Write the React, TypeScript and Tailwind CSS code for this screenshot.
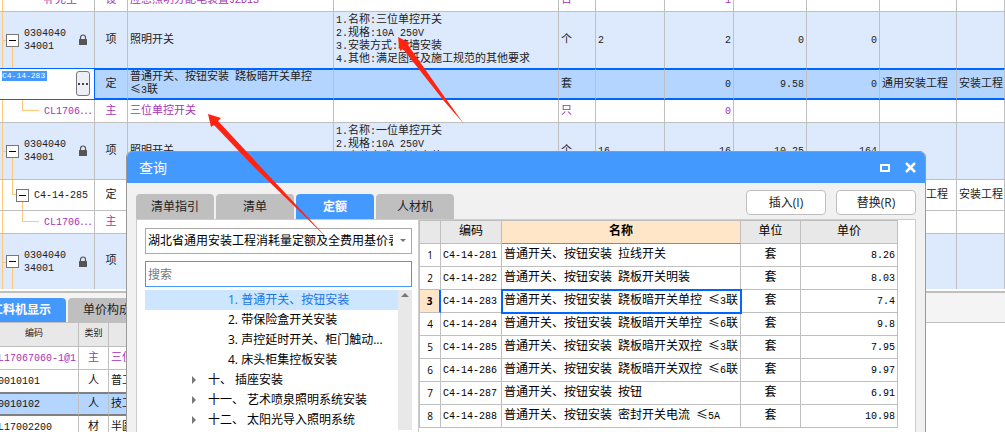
import React, { useState } from 'react';
import { X } from 'lucide-react';

type RowKind = 'item' | 'quota' | 'material' | 'selected';

interface BillRow {
  kind: RowKind;
  height: string;
  code: string;
  type: string;
  name: string;
  feature?: string[];
  unit?: string;
  expr?: string;
  qty?: string;
  price?: string;
  total?: string;
  profession?: string;
  fee?: string;
}

const billRows: BillRow[] = [
  { kind: 'material', height: 'h-[23px]', code: '补充主', type: '设', name: '应急照明分配电装置JZD1S', unit: '台', qty: '1' },
  {
    kind: 'item',
    height: 'h-14',
    code: '030404034001',
    type: '项',
    name: '照明开关',
    feature: ['1.名称:三位单控开关', '2.规格:10A 250V', '3.安装方式:暗墙安装', '4.其他:满足图纸及施工规范的其他要求'],
    unit: '个',
    expr: '2',
    qty: '2',
    price: '0',
    total: '0',
  },
  {
    kind: 'selected',
    height: 'h-8',
    code: 'C4-14-283',
    type: '定',
    name: '普通开关、按钮安装 跷板暗开关单控 ≤3联',
    unit: '套',
    qty: '0',
    price: '9.58',
    total: '0',
    profession: '通用安装工程',
    fee: '安装工程',
  },
  { kind: 'material', height: 'h-[23px]', code: 'CL1706⋯', type: '主', name: '三位单控开关', unit: '只', qty: '0' },
  {
    kind: 'item',
    height: 'h-[57px]',
    code: '030404034001',
    type: '项',
    name: '照明开关',
    feature: ['1.名称:一位单控开关', '2.规格:10A 250V', '3.安装方式:暗墙安装', '4.其他:满足图纸及施工规范的其他要求'],
    unit: '个',
    expr: '16',
    qty: '16',
    price: '10.25',
    total: '164',
  },
  {
    kind: 'quota',
    height: 'h-[31px]',
    code: 'C4-14-285',
    type: '定',
    name: '',
    profession: '通用安装工程',
    fee: '安装工程',
  },
  { kind: 'material', height: 'h-[23px]', code: 'CL1706⋯', type: '主', name: '' },
  { kind: 'item', height: 'h-[55px]', code: '030404034001', type: '项', name: '' },
];

const quotaRows = [
  { code: 'C4-14-281', name: '普通开关、按钮安装 拉线开关', price: '8.26' },
  { code: 'C4-14-282', name: '普通开关、按钮安装 跷板开关明装', price: '8.03' },
  { code: 'C4-14-283', name: '普通开关、按钮安装 跷板暗开关单控 ≤3联', price: '7.4' },
  { code: 'C4-14-284', name: '普通开关、按钮安装 跷板暗开关单控 ≤6联', price: '9.8' },
  { code: 'C4-14-285', name: '普通开关、按钮安装 跷板暗开关双控 ≤3联', price: '7.95' },
  { code: 'C4-14-286', name: '普通开关、按钮安装 跷板暗开关双控 ≤6联', price: '9.97' },
  { code: 'C4-14-287', name: '普通开关、按钮安装 按钮', price: '6.91' },
  { code: 'C4-14-288', name: '普通开关、按钮安装 密封开关电流 ≤5A', price: '10.98' },
];

const resourceRows = [
  { code: 'CL17067060-1@1', type: '主', name: '三位' },
  { code: '00010101', type: '人', name: '普工' },
  { code: '00010102', type: '人', name: '技工' },
  { code: 'CL17002200', type: '材', name: '半圆' },
];

const treeItems = [
  { label: '1. 普通开关、按钮安装', leaf: true },
  { label: '2. 带保险盒开关安装', leaf: true },
  { label: '3. 声控延时开关、柜门触动...', leaf: true },
  { label: '4. 床头柜集控板安装', leaf: true },
  { label: '十、 插座安装', leaf: false },
  { label: '十一、 艺术喷泉照明系统安装', leaf: false },
  { label: '十二、 太阳光导入照明系统', leaf: false },
];

const tabs = ['清单指引', '清单', '定额', '人材机'];

// Grid text: half-width characters one size smaller, full-width signs from the CJK font
function GridText({ children }: { children: string }) {
  const parts = children.split(/([\x20-\x7e]+|[≤⋯])/).filter(Boolean);
  return (
    <>
      {parts.map((part, i) => {
        if (/^[\x20-\x7e]/.test(part)) {
          return (
            <span key={i} className="text-[10px]">
              {part}
            </span>
          );
        }
        if (/^[≤⋯]/.test(part)) {
          return (
            <span key={i} className="font-['Noto_Sans_CJK_SC',sans-serif] leading-[8px]">
              {part}
            </span>
          );
        }
        return part;
      })}
    </>
  );
}

function LockIcon() {
  return (
    <svg width="10" height="12" viewBox="0 0 10 12" className="shrink-0" aria-hidden="true">
      <path d="M2.5 6V3.5a2.5 2.5 0 0 1 5 0V6" fill="none" stroke="#555" strokeWidth="1.2" />
      <rect x="1" y="5" width="8" height="6" rx="0.5" fill="#555" />
    </svg>
  );
}

function Toggle() {
  return (
    <button
      type="button"
      aria-label="折叠"
      className="relative flex h-[13px] w-[13px] shrink-0 items-center justify-center border border-[#777] bg-white"
    >
      <span className="h-px w-[7px] bg-black" />
    </button>
  );
}

function CodeCell({ row, index }: { row: BillRow; index: number }) {
  if (row.kind === 'selected') {
    return (
      <div className="flex h-full justify-between border-y border-[#0066ff] bg-white py-0.5 pl-0.5 pr-1">
        <input
          aria-label="编码"
          defaultValue={row.code}
          className="h-[10px] w-[45px] bg-[#4499ff] text-[8px] leading-[10px] text-white outline-none"
        />
        <button
          type="button"
          aria-label="选择"
          className="flex h-[25px] w-[14px] items-center justify-center gap-0.5 rounded-[3px] border border-[#777] bg-[#eceff5]"
        >
          <i className="h-0.5 w-0.5 bg-[#444]" />
          <i className="h-0.5 w-0.5 bg-[#444]" />
          <i className="h-0.5 w-0.5 bg-[#444]" />
        </button>
      </div>
    );
  }

  const line = 'absolute border-[#ffc878]';
  return (
    <div className="relative flex h-full items-center">
      <span className={`${line} inset-y-0 left-[2px] border-l`} />
      {row.kind === 'item' && (
        <>
          <span className={`${line} left-[2px] top-1/2 w-1 border-t`} />
          <span className={`${line} bottom-0 left-3 top-1/2 border-l`} />
          <div className="flex w-full items-center pl-1.5 pr-1.5">
            <Toggle />
            <span className="ml-[5px] w-[43px] break-all">
              <GridText>{row.code}</GridText>
            </span>
            <span className="ml-auto">
              <LockIcon />
            </span>
          </div>
        </>
      )}
      {row.kind === 'quota' && (
        <>
          <span className={`${line} bottom-1/2 left-3 top-0 w-1 border-b border-l`} />
          <span className={`${line} bottom-0 left-[22px] top-1/2 border-l`} />
          <div className="flex items-center pl-4">
            <Toggle />
            <span className="ml-[5px]">
              <GridText>{row.code}</GridText>
            </span>
          </div>
        </>
      )}
      {row.kind === 'material' && (
        <>
          {index > 0 && <span className={`${line} bottom-1/2 left-[22px] top-0 w-[17px] border-b border-l`} />}
          <span className="whitespace-nowrap pl-11">
            <GridText>{row.code}</GridText>
          </span>
        </>
      )}
    </div>
  );
}

function BillTable() {
  return (
    <table className="-mt-[11px] h-px w-full table-fixed border-separate border-spacing-0 text-[11px] leading-[13px]">
      <colgroup>
        <col className="w-[95px]" />
        <col className="w-[33px]" />
        <col className="w-[206px]" />
        <col className="w-[225px]" />
        <col className="w-[37px]" />
        <col className="w-[69px]" />
        <col className="w-[69px]" />
        <col className="w-[73px]" />
        <col className="w-[73px]" />
        <col className="w-[77px]" />
        <col />
      </colgroup>
      <tbody>
        {billRows.map((row, index) => {
          const selected = row.kind === 'selected';
          const beforeSelected = billRows[index + 1]?.kind === 'selected';
          const color = row.kind === 'material' ? 'text-[#a832b4]' : 'text-[#222]';
          const bg = selected ? 'bg-[#b3d5ff]' : row.kind === 'item' ? 'bg-[#dde9fd]' : 'bg-white';
          const edge = selected
            ? 'border-y-2 border-y-[#0066ff]'
            : beforeSelected || index === billRows.length - 1
              ? ''
              : 'border-b border-b-[#bfbfbf]';
          const cell = `overflow-hidden border-r border-r-[#bfbfbf] ${edge}`;
          return (
            <tr key={index} className={`${row.height} ${color} ${bg}`}>
              <td className={`h-full border-r p-0 ${selected ? 'border-r-[#0066ff]' : `border-r-[#bfbfbf] ${edge}`}`}>
                <CodeCell row={row} index={index} />
              </td>
              <td className={`${cell} p-0 text-center`}>{row.type}</td>
              <td className={`${cell} px-0.5 py-0`}>
                <GridText>{row.name}</GridText>
              </td>
              <td className={`${cell} px-0.5 py-0`}>
                {row.feature?.map((text) => (
                  <div key={text} className="whitespace-nowrap">
                    <GridText>{text}</GridText>
                  </div>
                ))}
              </td>
              <td className={`${cell} px-0.5 py-0`}>{row.unit}</td>
              <td className={`${cell} px-0.5 py-0`}>
                <GridText>{row.expr ?? ''}</GridText>
              </td>
              <td className={`${cell} px-0.5 py-0 text-right`}>
                <GridText>{row.qty ?? ''}</GridText>
              </td>
              <td className={`${cell} px-0.5 py-0 text-right`}>
                <GridText>{row.price ?? ''}</GridText>
              </td>
              <td className={`${cell} px-0.5 py-0 text-right`}>
                <GridText>{row.total ?? ''}</GridText>
              </td>
              <td className={`${cell} whitespace-nowrap px-0.5 py-0`}>{row.profession}</td>
              <td className={`${cell} whitespace-nowrap px-0.5 py-0`}>{row.fee}</td>
            </tr>
          );
        })}
      </tbody>
    </table>
  );
}

function ResourcePanel() {
  return (
    <section className="flex-1 overflow-hidden border-t-2 border-[#bfbfbf] bg-white">
      <div className="flex h-[30px] items-end gap-0.5 border-b border-[#bfbfbf] bg-[#f4f4f4] font-['Open_Sans','Noto_Sans_CJK_SC',sans-serif] text-xs">
        <button
          type="button"
          className="flex h-6 w-[66px] items-center justify-end overflow-hidden whitespace-nowrap rounded-tr-sm bg-[#4499ff] pr-[15px] font-bold text-white"
        >
          工料机显示
        </button>
        <button type="button" className="h-6 rounded-t-sm bg-[#bfbfbf] px-[15px] text-[#222]">
          单价构成
        </button>
      </div>
      <table className="-ml-[10px] w-[460px] table-fixed border-separate border-spacing-0 text-[11px] leading-[13px]">
        <colgroup>
          <col className="w-[89px]" />
          <col className="w-[30px]" />
          <col />
        </colgroup>
        <thead>
          <tr className="h-6 bg-[#e8e8e8] text-[9px] text-[#222]">
            <th className="border-b border-r border-[#bfbfbf] p-0 font-normal">编码</th>
            <th className="border-b border-r border-[#bfbfbf] p-0 font-normal">类别</th>
            <th className="border-b border-r border-[#bfbfbf] p-0 font-normal" />
          </tr>
        </thead>
        <tbody>
          {resourceRows.map((row, i) => {
            const edge = i === 2 ? 'border-y-2 border-y-[#808080]' : i === 1 ? '' : 'border-b border-b-[#bfbfbf]';
            const height = i === 2 ? 'h-6' : i === 1 ? 'h-[22px]' : 'h-[23px]';
            const cell = `border-r border-r-[#bfbfbf] ${edge}`;
            return (
              <tr
                key={row.code}
                className={`${height} ${i === 2 ? 'bg-[#b3d5ff]' : ''} ${i === 0 ? 'text-[#a832b4]' : 'text-[#111]'}`}
              >
                <td className={`${cell} px-0.5 py-0`}>
                  <GridText>{row.code}</GridText>
                </td>
                <td className={`${cell} p-0 text-center`}>{row.type}</td>
                <td className={`${cell} px-0.5 py-0`}>{row.name}</td>
              </tr>
            );
          })}
        </tbody>
      </table>
    </section>
  );
}

function QuotaTable() {
  const cell = 'border-b border-r border-[#bfbfbf]';
  return (
    <table className="w-[479px] table-fixed border-separate border-spacing-0 border-l border-t border-[#bfbfbf] text-xs leading-4 text-black">
      <colgroup>
        <col className="w-[21px]" />
        <col className="w-[61px]" />
        <col className="w-[239px]" />
        <col className="w-[60px]" />
        <col />
      </colgroup>
      <thead>
        <tr className="h-[23px] bg-[#e8e8e8]">
          <th className={`${cell} p-0`} aria-label="序号" />
          <th className={`${cell} p-0 font-normal`}>编码</th>
          <th className="border-b border-r border-b-[#4499ff] border-r-[#bfbfbf] bg-[#ffe6c8] p-0 font-bold">名称</th>
          <th className={`${cell} p-0 font-normal`}>单位</th>
          <th className={`${cell} p-0 font-normal`}>单价</th>
        </tr>
      </thead>
      <tbody>
        {quotaRows.map((row, i) => {
          const active = i === 2;
          return (
            <tr key={row.code} className="h-[23px]">
              <th
                className={`border-b border-b-[#bfbfbf] p-0 font-['Open_Sans',sans-serif] text-[10px] ${
                  active
                    ? 'border-r-2 border-r-[#0066ff] bg-[#ffe6c8] font-bold'
                    : 'border-r border-r-[#bfbfbf] font-normal'
                }`}
              >
                {i + 1}
              </th>
              <td className={`${cell} px-0.5 py-0`}>
                <GridText>{row.code}</GridText>
              </td>
              <td
                className={`whitespace-nowrap p-0 pl-0.5 ${
                  active ? 'outline-2 -outline-offset-1 outline-[#0066ff]' : cell
                }`}
              >
                <GridText>{row.name}</GridText>
              </td>
              <td className={`${cell} p-0 text-center`}>套</td>
              <td className={`${cell} px-0.5 py-0 text-right`}>
                <GridText>{row.price}</GridText>
              </td>
            </tr>
          );
        })}
      </tbody>
    </table>
  );
}

function QueryDialog() {
  const [tab, setTab] = useState('定额');
  const [current, setCurrent] = useState(0);

  return (
    <div
      role="dialog"
      aria-label="查询"
      className="absolute left-[126px] top-[151px] flex h-[320px] w-[800px] flex-col overflow-hidden rounded-t-md border border-[#999] bg-[#f1f1f1] font-['Open_Sans','Noto_Sans_CJK_SC',sans-serif] text-xs text-black"
    >
      <header className="flex h-[31px] shrink-0 items-center bg-[#4499ff] pl-3 pr-[7px] text-white">
        <h2 className="flex-1 text-sm">查询</h2>
        <button type="button" aria-label="最大化" className="mr-[13px] h-2 w-[10px] border-2 border-white" />
        <button type="button" aria-label="关闭">
          <X size={15} strokeWidth={4} />
        </button>
      </header>

      <div className="flex h-9 shrink-0 items-end justify-between pl-[9px] pr-[9px]">
        <div className="flex gap-0.5" role="tablist">
          {tabs.map((label) => (
            <button
              key={label}
              type="button"
              role="tab"
              aria-selected={tab === label}
              onClick={() => setTab(label)}
              className={`h-[25px] w-[78px] rounded-t-sm ${
                tab === label ? 'bg-[#4499ff] font-bold text-white' : 'bg-[#bfbfbf] text-[#222]'
              }`}
            >
              {label}
            </button>
          ))}
        </div>
        <div className="flex gap-[10px] pb-1">
          <button type="button" className="h-[25px] w-20 rounded-sm border border-[#bfbfbf] bg-white text-[#222]">
            插入(I)
          </button>
          <button type="button" className="h-[25px] w-20 rounded-sm border border-[#bfbfbf] bg-white text-[#222]">
            替换(R)
          </button>
        </div>
      </div>

      <div className="mx-[9px] flex flex-1 overflow-hidden border border-[#ccc] bg-white">
        <div className="w-[282px] shrink-0 border-r border-[#ccc] pl-2 pt-2">
          <div className="relative w-[267px]">
            <select
              aria-label="定额库"
              className="h-[26px] w-full appearance-none border border-[#aaa] bg-white pl-0.5 pr-[18px]"
            >
              <option>湖北省通用安装工程消耗量定额及全费用基价表</option>
            </select>
            <span className="pointer-events-none absolute right-1.5 top-[11px] border-x-[3px] border-t-[3px] border-x-transparent border-t-[#777]" />
          </div>
          <input
            type="text"
            aria-label="搜索"
            placeholder="搜索"
            className="mt-[7px] block h-[26px] w-[267px] border border-[#4499ff] px-0.5 outline-none placeholder:text-[#777]"
          />
          <div className="mt-[3px] flex w-[267px]">
            <ul className="flex-1">
              {treeItems.map((item, i) => (
                <li key={item.label}>
                  <button
                    type="button"
                    onClick={() => setCurrent(i)}
                    className={`flex h-5 w-full items-center whitespace-nowrap ${
                      item.leaf ? 'pl-[83px]' : 'pl-[47px]'
                    } ${current === i ? 'bg-[#cce6ff] text-[#1a75e6]' : ''}`}
                  >
                    {!item.leaf && (
                      <span className="mr-3 border-y-4 border-l-4 border-y-transparent border-l-[#777]" />
                    )}
                    {item.label}
                  </button>
                </li>
              ))}
            </ul>
            <div className="flex w-[14px] justify-center bg-[#e8e8e8] pt-[3px]">
              <span className="h-0 border-x-4 border-b-4 border-x-transparent border-b-[#777]" />
            </div>
          </div>
        </div>
        <div className="font-['Liberation_Mono','Noto_Sans_CJK_SC',monospace]">
          <QuotaTable />
        </div>
      </div>
    </div>
  );
}

function Arrows() {
  return (
    <svg className="pointer-events-none absolute left-0 top-0" width="500" height="260" aria-hidden="true">
      <g fill="#ff2412">
        <path d="M398 37 L410 43 L408 45 L446 99 L464 124 L444 101 L403 49 L400 51 Z" />
        <path d="M208 114 L221 118 L218 121 L258 164 L328 239 L254 167 L214 125 L211 127 Z" />
      </g>
    </svg>
  );
}

export default function App() {
  return (
    <main className="relative flex h-screen flex-col overflow-hidden bg-white font-['Liberation_Mono','Noto_Sans_CJK_SC',monospace]">
      <div className="shrink-0 pb-0.5">
        <BillTable />
      </div>
      <ResourcePanel />
      <QueryDialog />
      <Arrows />
    </main>
  );
}
